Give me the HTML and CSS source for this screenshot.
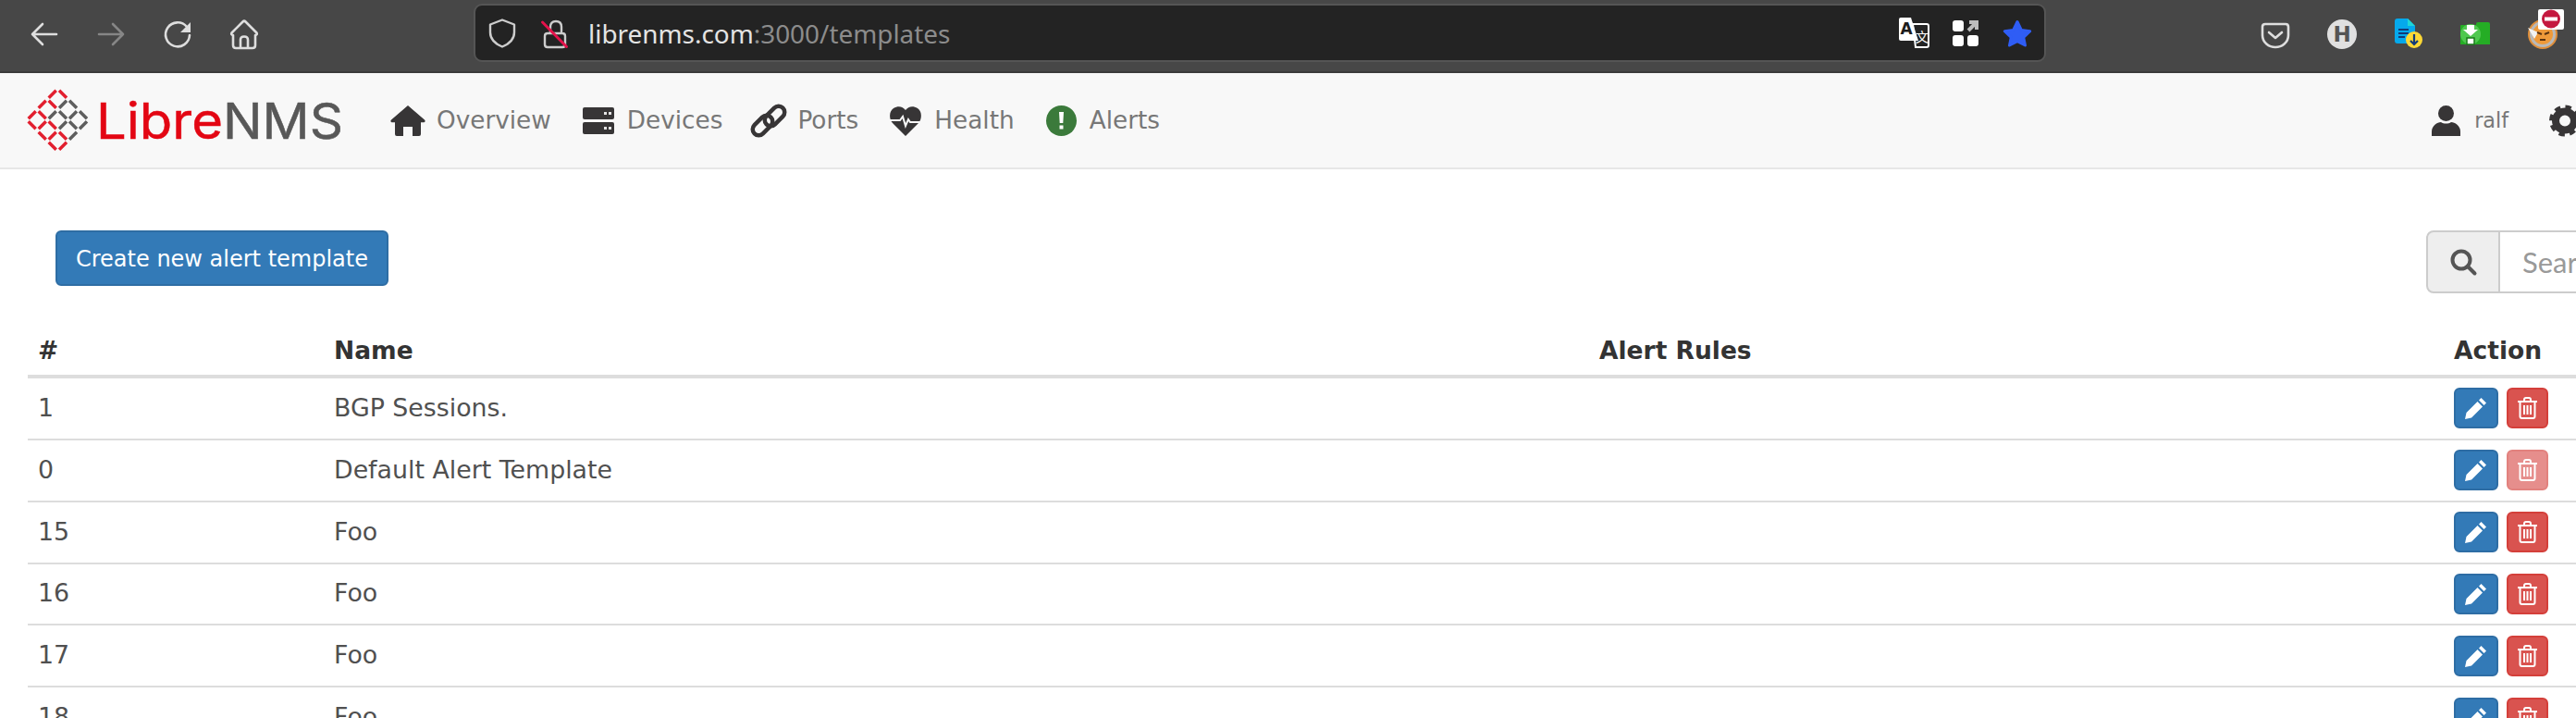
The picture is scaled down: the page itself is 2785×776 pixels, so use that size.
FILE: index.html
```html
<!DOCTYPE html>
<html lang="en">
<head>
<meta charset="utf-8">
<title>LibreNMS templates</title>
<link rel="stylesheet" href="styles.css">
</head>
<body>
<header class="browser">
  <div class="tb-group tb-nav">
    <svg class="tb-icon" viewBox="0 0 32 32"><path class="ln" d="M3 16H29M14 5 3 16 14 27"/></svg>
    <svg class="tb-icon dim" viewBox="0 0 32 32"><path class="ln" d="M3 16H29M18 5 29 16 18 27"/></svg>
    <svg class="tb-icon" viewBox="0 0 32 32"><path class="ln" d="M26 8A13 13 0 1 0 29 17"/><path class="fl" d="M30 3V14H19z"/></svg>
    <svg class="tb-icon" viewBox="0 0 32 32"><path class="ln" d="M2.5 14.5 14.5 2.5q1.500-1.500 3 0L29.500 14.500q1 2-1.500 2.500H28V28q0 3-3 3H7q-3 0-3-3V17H4q-2.500-.5-1.500-2.500zM12 31V22q0-3.500 4-3.500t4 3.500V31"/></svg>
  </div>
  <div class="urlbar">
    <svg class="url-shield" viewBox="0 0 30 32"><path class="ln thin" d="M15 1.500 28 6.500V15C28 23 21 28 15 30.500 9 28 2 23 2 15V6.500z"/></svg>
    <svg class="url-lock" viewBox="0 0 30 32"><path class="ln thin" d="M10 16V9q0-6 6-6t6 6V16M4 19q0-3 3-3H23q3 0 3 3V28q0 3-3 3H7q-3 0-3-3z"/><path class="lock-slash" d="M1.500 4 27.500 30.500"/></svg>
    <div class="url-text"><span class="url-host">librenms.com</span><span class="url-path">:3000/templates</span></div>
    <div class="url-actions">
      <svg class="act-tr" viewBox="0 0 32 32">
        <path class="tr-back" d="M15 6H30q2 0 2 2V29q0 2-2 2H18z"/>
        <path class="fl-w" d="M2 -1H13L21 24H2q-2 0-2-2V1q0-2 2-2z"/>
        <text class="tr-a" x="8" y="17">A</text>
        <text class="tr-z" x="18" y="25">文</text>
      </svg>
      <svg class="act-grid" viewBox="0 0 28 28">
        <rect class="fl-w" width="12" height="12" rx="3"/>
        <rect class="fl-w" y="16" width="12" height="12" rx="3"/>
        <rect class="fl-w" x="16" y="16" width="12" height="12" rx="3"/>
        <path class="grid-arrow" d="M17 11 26 2M18 2H26V10"/>
      </svg>
      <svg class="act-star" viewBox="0 0 32 30"><path class="star" d="M16 2.500 20.300 11.500 29.700 12.700 22.700 19.300 24.500 28 16 23.700 7.500 28 9.300 19.300 2.300 12.700 11.700 11.500z"/></svg>
    </div>
  </div>
  <div class="tb-group tb-ext">
    <svg class="tb-icon" viewBox="0 0 32 32"><path class="ln" d="M2 8q0-3 3-3H27q3 0 3 3V17C30 25 23 30 16 30S2 25 2 17z"/><path class="ln" d="M9 14 16 20 23 14"/></svg>
    <svg class="tb-icon" viewBox="0 0 32 32"><circle class="h-disc" cx="16" cy="16" r="16"/><text class="h-text" x="16" y="24">H</text></svg>
    <svg class="tb-icon" viewBox="0 0 32 32">
      <path class="doc" d="M4 -1H15L23 7V23q0 3-3 3H4q-3 0-3-3V2q0-3 3-3z"/>
      <path class="doc-ear" d="M15 -1 23 7H15z"/>
      <path class="doc-lines" d="M5 11H16M5 15H16M5 19H12"/>
      <circle class="doc-badge" cx="22" cy="22" r="9"/>
      <path class="doc-arrow" d="M22 16V27M18 23 22 27 26 23"/>
    </svg>
    <svg class="tb-icon" viewBox="0 0 32 32">
      <path class="folder" d="M17 5q0-2 2-2H30q2 0 2 2V27H0V7q0-1 1-1H17z"/>
      <circle class="folder-glow" cx="11" cy="16" r="11"/>
      <path class="fl-w" d="M7 6H15V11H19L11 18 3 11H7z"/>
      <path class="folder-box" d="M7 20H15V27H7z"/>
    </svg>
    <div class="fox">
      <svg class="tb-icon" viewBox="0 0 32 32">
        <circle class="fox-ring" cx="17" cy="16" r="15"/>
        <circle class="fox-face" cx="17" cy="16" r="11"/>
        <path class="fox-white" d="M1 9 12 14 8 21z"/>
        <path class="fox-eye" d="M11 14 16 16M19 16 24 14M14 22 20 22"/>
      </svg>
      <svg class="fox-badge" viewBox="0 0 28 22"><rect class="fl-w" width="28" height="22" rx="2"/><circle class="no-disc" cx="14" cy="10.500" r="10"/><rect class="fl-w" x="7" y="8.500" width="14" height="4"/></svg>
    </div>
  </div>
</header>

<nav class="navbar">
  <svg class="logo" viewBox="30 94 342 70" aria-label="LibreNMS">
    <path class="logo-red" d="M52.700 104.700l8-8M64 96.700l8 8M41.700 115.700l8-8M52.700 107.700l8 8M30.700 127.300l8-8M41.700 119.300l8 8M30.700 130.300l8 8M41.700 138.300l8-8M52.700 130.300l8 8M41.700 141.700l8 8M52.700 149.700l8-8M64 141.700l8 8M52.700 152.700l8 8M64 160.700l8-8"/>
    <path class="logo-grey" d="M64 115.700l8-8M75 107.700l8 8M52.700 127.300l8-8M64 119.300l8 8M75 127.300l8-8M86 119.300l8 8M64 138.300l8-8M75 130.300l8 8M86 138.300l8-8M75 149.700l8-8"/>
    <text class="logo-libre" x="104" y="149" textLength="137" lengthAdjust="spacingAndGlyphs">Libre</text>
    <text class="logo-nms" x="241" y="149" textLength="130" lengthAdjust="spacingAndGlyphs">NMS</text>
  </svg>
  <ul class="nav-list">
    <li class="nav-item">
      <svg class="nav-icon i-home" viewBox="0 0 38 33"><path class="ic" d="M19 0 37 15.500q1.500 1.800-.5 2.700H33V31q0 2-2 2H24V23H14V33H7q-2 0-2-2V18.200H1.500Q-.5 17.300 1 15.500z"/></svg>
      <span>Overview</span>
    </li>
    <li class="nav-item">
      <svg class="nav-icon i-dev" viewBox="0 0 34 33"><rect class="ic" y="2" width="34" height="13" rx="2"/><rect class="ic" y="18" width="34" height="13" rx="2"/><path class="dots" d="M23 7h3v3h-3zM28 7h3v3h-3zM23 23h3v3h-3zM28 23h3v3h-3z"/></svg>
      <span>Devices</span>
    </li>
    <li class="nav-item">
      <svg class="nav-icon i-link" viewBox="0 0 40 33"><g class="chain"><rect x="1" y="15" width="25" height="13" rx="6.500" transform="rotate(-45 13.500 21.500)"/><rect x="14" y="5" width="25" height="13" rx="6.500" transform="rotate(-45 26.500 11.500)"/></g></svg>
      <span>Ports</span>
    </li>
    <li class="nav-item">
      <svg class="nav-icon i-heart" viewBox="0 0 34 33"><path class="ic" d="M17 33 3 19C-1 15-1 6 4 3 9 0 14 1 17 5 20 1 25 0 30 3 35 6 35 15 31 19z"/><path class="pulse" d="M0 16H11L14 12 17 22 20 15 22 18H34"/></svg>
      <span>Health</span>
    </li>
    <li class="nav-item">
      <svg class="nav-icon i-alert" viewBox="0 0 33 33"><circle class="alert-disc" cx="16.500" cy="16.500" r="16.500"/><path class="fl-w" d="M14 7h5l-.7 12h-3.600zM14.500 21.500h4v4h-4z"/></svg>
      <span>Alerts</span>
    </li>
  </ul>
  <div class="nav-right">
    <div class="nav-item nav-user">
      <svg class="nav-icon i-user" viewBox="0 0 31 33"><circle class="ic" cx="15.500" cy="8.500" r="8.500"/><path class="ic" d="M0 33V28C0 22 6 18 10 18 13 20 18 20 21 18 25 18 31 22 31 28V33z"/></svg>
      <span class="user-name">ralf</span>
    </div>
    <svg class="nav-icon i-gear" viewBox="0 0 34 33"><circle class="gear-ring" cx="17" cy="16.500" r="10"/><circle class="gear-teeth" cx="17" cy="16.500" r="14"/></svg>
  </div>
</nav>

<main class="content">
  <div class="actions-row">
    <button class="btn-create" type="button">Create new alert template</button>
    <div class="search">
      <span class="search-addon">
        <svg class="search-icon" viewBox="0 0 28 28"><circle cx="12" cy="12" r="9.500"/><path d="M19 19 26.500 26.500"/></svg>
      </span>
      <input class="search-input" type="text" placeholder="Search" aria-label="Search">
    </div>
  </div>
  <table class="grid">
    <thead>
      <tr><th class="c-id">#</th><th class="c-name">Name</th><th class="c-rules">Alert Rules</th><th class="c-act">Action</th></tr>
    </thead>
    <tbody>
      <tr><td>1</td><td>BGP Sessions.</td><td></td><td><div class="row-btns"><button class="btn-edit" type="button"><svg class="pen" viewBox="0 0 24 24"><path d="M17.500 1 23 6.500 20.500 9 15 3.500zM13.500 5 19 10.500 7 22.500 0 24 1.500 17z"/></svg></button><button class="btn-del" type="button"><svg class="bin" viewBox="0 0 21 24"><path d="M0 5H21M7 5V3q0-2 2-2H12q2 0 2 2V5M2.500 5V21q0 2 2 2H16.500q2 0 2-2V5M7 9V19M10.500 9V19M14 9V19"/></svg></button></div></td></tr>
      <tr><td>0</td><td>Default Alert Template</td><td></td><td><div class="row-btns"><button class="btn-edit" type="button"><svg class="pen" viewBox="0 0 24 24"><path d="M17.500 1 23 6.500 20.500 9 15 3.500zM13.500 5 19 10.500 7 22.500 0 24 1.500 17z"/></svg></button><button class="btn-del is-off" type="button"><svg class="bin" viewBox="0 0 21 24"><path d="M0 5H21M7 5V3q0-2 2-2H12q2 0 2 2V5M2.500 5V21q0 2 2 2H16.500q2 0 2-2V5M7 9V19M10.500 9V19M14 9V19"/></svg></button></div></td></tr>
      <tr><td>15</td><td>Foo</td><td></td><td><div class="row-btns"><button class="btn-edit" type="button"><svg class="pen" viewBox="0 0 24 24"><path d="M17.500 1 23 6.500 20.500 9 15 3.500zM13.500 5 19 10.500 7 22.500 0 24 1.500 17z"/></svg></button><button class="btn-del" type="button"><svg class="bin" viewBox="0 0 21 24"><path d="M0 5H21M7 5V3q0-2 2-2H12q2 0 2 2V5M2.500 5V21q0 2 2 2H16.500q2 0 2-2V5M7 9V19M10.500 9V19M14 9V19"/></svg></button></div></td></tr>
      <tr><td>16</td><td>Foo</td><td></td><td><div class="row-btns"><button class="btn-edit" type="button"><svg class="pen" viewBox="0 0 24 24"><path d="M17.500 1 23 6.500 20.500 9 15 3.500zM13.500 5 19 10.500 7 22.500 0 24 1.500 17z"/></svg></button><button class="btn-del" type="button"><svg class="bin" viewBox="0 0 21 24"><path d="M0 5H21M7 5V3q0-2 2-2H12q2 0 2 2V5M2.500 5V21q0 2 2 2H16.500q2 0 2-2V5M7 9V19M10.500 9V19M14 9V19"/></svg></button></div></td></tr>
      <tr><td>17</td><td>Foo</td><td></td><td><div class="row-btns"><button class="btn-edit" type="button"><svg class="pen" viewBox="0 0 24 24"><path d="M17.500 1 23 6.500 20.500 9 15 3.500zM13.500 5 19 10.500 7 22.500 0 24 1.500 17z"/></svg></button><button class="btn-del" type="button"><svg class="bin" viewBox="0 0 21 24"><path d="M0 5H21M7 5V3q0-2 2-2H12q2 0 2 2V5M2.500 5V21q0 2 2 2H16.500q2 0 2-2V5M7 9V19M10.500 9V19M14 9V19"/></svg></button></div></td></tr>
      <tr><td>18</td><td>Foo</td><td></td><td><div class="row-btns"><button class="btn-edit" type="button"><svg class="pen" viewBox="0 0 24 24"><path d="M17.500 1 23 6.500 20.500 9 15 3.500zM13.500 5 19 10.500 7 22.500 0 24 1.500 17z"/></svg></button><button class="btn-del" type="button"><svg class="bin" viewBox="0 0 21 24"><path d="M0 5H21M7 5V3q0-2 2-2H12q2 0 2 2V5M2.500 5V21q0 2 2 2H16.500q2 0 2-2V5M7 9V19M10.500 9V19M14 9V19"/></svg></button></div></td></tr>
    </tbody>
  </table>
</main>
</body>
</html>
```

FILE: styles.css
```css
* { box-sizing: border-box; }
html, body { height: 100%; }
body {
  margin: 0;
  overflow: hidden;
  background: #fff;
  font-family: "DejaVu Sans", sans-serif;
  font-size: 26px;
  color: #505050;
}
svg { display: block; overflow: visible; flex: none; }

/* browser chrome */
.browser {
  display: flex;
  height: 79px;
  padding-bottom: 6px;
  align-items: center;
  background: #474747;
  border-bottom: 2px solid #3b3b3b;
}
.tb-group { display: flex; gap: 40px; padding-top: 3px; }
.tb-nav { padding-left: 32px; }
.tb-ext { margin-left: 232px; }
.tb-icon { width: 32px; height: 32px; }
.dim { opacity: .42; }
.ln { fill: none; stroke: #dedede; stroke-width: 2.6; stroke-linecap: round; stroke-linejoin: round; }
.ln.thin { stroke: #cdcdcd; stroke-width: 2.4; }
.fl { fill: #dedede; }
.fl-w { fill: #fff; }
.urlbar {
  display: flex;
  align-items: center;
  width: 1700px;
  height: 63px;
  margin-left: 232px;
  padding: 0 13px 0 14px;
  background: #232323;
  border: 2px solid #555;
  border-radius: 9px;
}
.url-shield { width: 30px; height: 32px; }
.url-lock { width: 30px; height: 32px; margin-left: 27px; }
.lock-slash { fill: none; stroke: #e3124b; stroke-width: 3; stroke-linecap: round; }
.url-text { margin-left: 21px; font-family: "Noto Sans", sans-serif; font-size: 27.900px; line-height: 36px; }
.url-host { color: #e4e4e4; }
.url-path { color: #8c8c8c; }
.url-actions { display: flex; align-items: center; gap: 26px; margin-left: auto; }
.act-tr { width: 32px; height: 32px; }
.act-grid { width: 28px; height: 28px; }
.act-star { width: 32px; height: 30px; }
.tr-back { fill: #232323; stroke: #fff; stroke-width: 2; }
.tr-a { font-family: "DejaVu Sans", sans-serif; font-weight: 700; font-size: 17px; fill: #1c1c1c; text-anchor: middle; }
.tr-z { font-family: "Noto Sans CJK SC", sans-serif; font-size: 14px; fill: #fff; }
.grid-arrow { fill: none; stroke: #bdbdbd; stroke-width: 4; }
.star { fill: #2f5df5; stroke: #2f5df5; stroke-width: 3; stroke-linejoin: round; }
.h-disc { fill: #e0e0e0; }
.h-text { font-family: "DejaVu Sans", sans-serif; font-weight: 700; font-size: 23px; fill: #555; text-anchor: middle; }
.doc { fill: #05a9ec; }
.doc-ear { fill: #1fd6d6; }
.doc-lines { fill: none; stroke: #123a78; stroke-width: 2; }
.doc-badge { fill: #fdd835; }
.doc-arrow { fill: none; stroke: #123a78; stroke-width: 2.2; }
.folder { fill: #25ad25; }
.folder-glow { fill: #4fc84f; }
.folder-box { fill: #fff; stroke: #1a7a1a; stroke-width: 1.5; }
.fox { position: relative; width: 32px; height: 32px; }
.fox-ring { fill: #b9b9b9; stroke: #e08f3a; stroke-width: 2; }
.fox-face { fill: #ef9a3a; }
.fox-white { fill: #f3f3f3; }
.fox-eye { fill: none; stroke: #5a3312; stroke-width: 2; }
.fox-badge { position: absolute; left: 12px; top: -11px; width: 28px; height: 22px; }
.no-disc { fill: #c4183f; }

/* navbar */
.navbar {
  display: flex;
  align-items: center;
  height: 104px;
  background: #f8f8f8;
  border-bottom: 2px solid #e7e7e7;
  color: #777;
  font-size: 26.300px;
}
.logo { width: 342px; height: 70px; margin-left: 30px; }
.logo-red { fill: none; stroke: #e21f2f; stroke-width: 3.5; }
.logo-grey { fill: none; stroke: #5e5e5e; stroke-width: 3.5; }
.logo-libre, .logo-nms { font-family: "Inter", sans-serif; font-size: 54px; stroke-width: .5; }
.logo-libre { fill: #e30613; stroke: #e30613; }
.logo-nms { fill: #585858; stroke: #585858; }
.nav-list { display: flex; align-items: center; gap: 34px; margin: 0 0 0 50px; padding: 0; list-style: none; }
.nav-item { display: flex; align-items: center; gap: 12px; }
.nav-icon { height: 33px; }
.i-home { width: 38px; }
.i-dev { width: 34px; margin-right: 2px; }
.i-link { width: 40px; margin: 0 -1px 0 -4px; }
.i-heart { width: 34px; margin-right: 2px; }
.i-alert { width: 33px; margin-right: 2px; }
.i-user { width: 31px; }
.i-gear { width: 34px; }
.ic { fill: #373536; }
.dots { fill: #e4e4e4; }
.chain rect { fill: none; stroke: #373536; stroke-width: 4.5; }
.pulse { fill: none; stroke: #f8f8f8; stroke-width: 2; }
.alert-disc { fill: #3b7a3b; }
.nav-right { display: flex; align-items: center; gap: 44px; margin-left: auto; margin-right: -5px; }
.nav-user { gap: 15px; }
.user-name { font-size: 22.300px; }
.gear-ring { fill: none; stroke: #373536; stroke-width: 8; }
.gear-teeth { fill: none; stroke: #373536; stroke-width: 6; stroke-dasharray: 6 5; }

/* content */
.content { padding-top: 66px; }
.actions-row { display: flex; align-items: flex-start; height: 68px; padding-left: 60px; }
.btn-create {
  width: 360px;
  height: 60px;
  padding: 2px 0 0;
  font: inherit;
  font-size: 24px;
  color: #fff;
  background: #337ab7;
  border: 2px solid #2e6da4;
  border-radius: 6px;
}
.search { display: flex; flex: none; width: 300px; height: 68px; margin-left: auto; margin-right: -138px; }
.search-addon {
  display: flex;
  align-items: center;
  justify-content: center;
  width: 80px;
  background: #eee;
  border: 2px solid #ccc;
  border-radius: 8px 0 0 8px;
}
.search-icon { width: 28px; height: 28px; fill: none; stroke: #555; stroke-width: 4; stroke-linecap: round; }
.search-input {
  flex: 1;
  min-width: 0;
  padding: 0 0 0 24px;
  font-family: "Lato", sans-serif;
  font-size: 31px;
  background: #fff;
  border: 2px solid #ccc;
  border-left: 0;
}
.search-input::placeholder { color: #999; opacity: 1; }
.grid { width: 2800px; margin: 20px 0 0 30px; border-collapse: separate; border-spacing: 0; table-layout: fixed; }
th, td { padding: 0 11px; text-align: left; }
th { height: 72px; padding-bottom: 8px; vertical-align: bottom; font-size: 26.500px; font-weight: 700; line-height: 37px; color: #333; border-bottom: 4px solid #ddd; }
td { height: 66.850px; padding-bottom: 2px; font-size: 26.800px; vertical-align: middle; border-bottom: 2px solid #ddd; }
.c-id { width: 320px; }
.c-name { width: 1368px; }
.c-rules { width: 924px; }
.row-btns { display: flex; gap: 9px; margin-top: 2px; }
.btn-edit, .btn-del {
  display: flex;
  align-items: center;
  justify-content: center;
  height: 44px;
  padding: 0;
  border-radius: 6px;
}
.btn-edit { width: 48px; background: #337ab7; border: 2px solid #2e6da4; }
.btn-del { width: 45px; background: #d9534f; border: 2px solid #d43f3a; }
.btn-del.is-off { opacity: .65; }
.pen { width: 24px; height: 24px; fill: #fff; }
.bin { width: 21px; height: 24px; fill: none; stroke: #fff; stroke-width: 2; }
```
